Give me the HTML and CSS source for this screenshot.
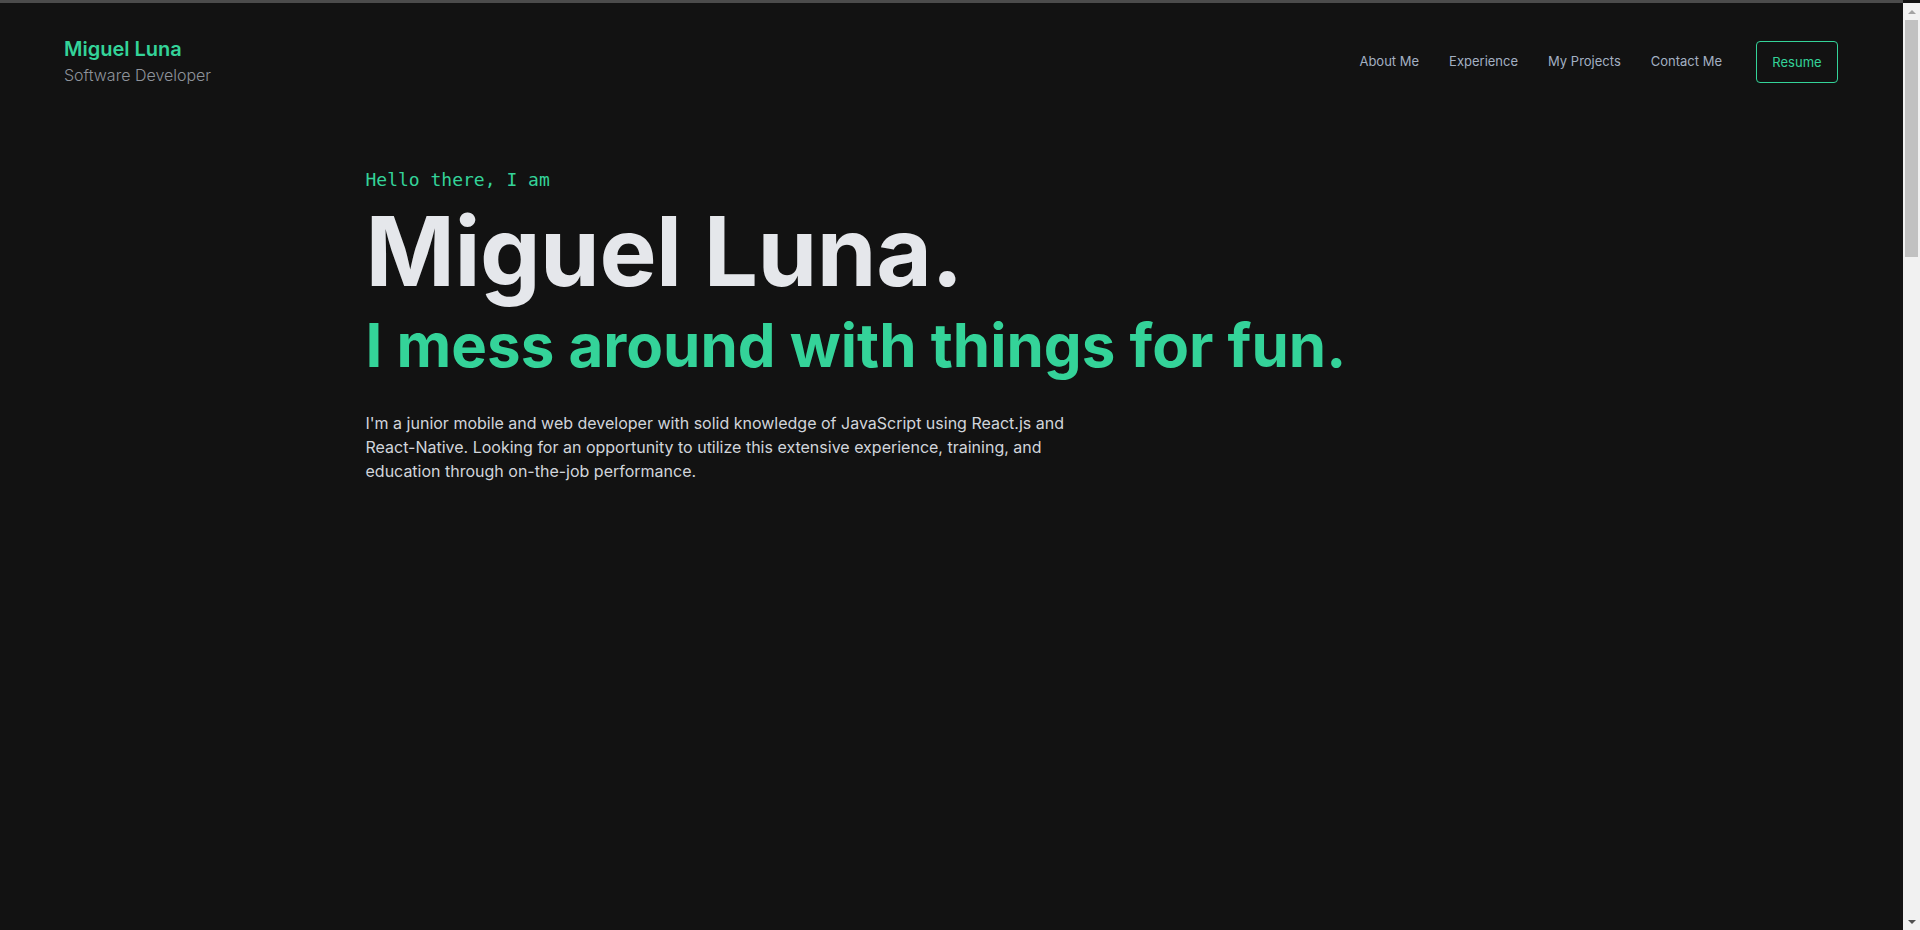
FILE: index.html
```html
<!DOCTYPE html>
<html lang="en">
<head>
<meta charset="utf-8">
<title>Miguel Luna</title>
<link rel="stylesheet" href="styles.css">
</head>
<body>
<header class="header">
  <div class="brand">
    <div class="brand-name">Miguel Luna</div>
    <div class="brand-role">Software Developer</div>
  </div>
  <nav class="nav">
    <a class="nav-link" href="#about">About Me</a>
    <a class="nav-link" href="#experience">Experience</a>
    <a class="nav-link" href="#projects">My Projects</a>
    <a class="nav-link" href="#contact">Contact Me</a>
    <a class="resume-btn" href="#resume">Resume</a>
  </nav>
</header>
<main class="hero">
  <p class="hello">Hello there, I am</p>
  <h1 class="hero-name">Miguel Luna.</h1>
  <h2 class="hero-tagline">I mess around with things for fun.</h2>
  <p class="hero-text">I'm a junior mobile and web developer with solid knowledge of JavaScript using React.js and React-Native. Looking for an opportunity to utilize this extensive experience, training, and education through on-the-job performance.</p>
</main>
<div class="scrollbar" aria-hidden="true">
  <span class="sb-button"><span class="sb-arrow-up"></span></span>
  <span class="sb-thumb"></span>
  <span class="sb-track"></span>
  <span class="sb-button"><span class="sb-arrow-down"></span></span>
</div>
</body>
</html>
```
FILE: styles.css
```css
html {
  background: #121212;
}
body {
  margin: 0 17px 0 0;
  border-top: 3px solid #4b4b4b;
  background: #121212;
  font-family: Inter, "Noto Sans", sans-serif;
  color: #e5e7eb;
}
.header {
  display: flex;
  justify-content: space-between;
  align-items: flex-start;
  padding: 32px 65px 0 64px;
}
.brand-name {
  font-size: 20px;
  line-height: 28px;
  font-weight: 600;
  color: #34d399;
}
.brand-role {
  font-size: 16px;
  line-height: 24px;
  font-weight: 300;
  color: #8e939b;
}
.nav {
  display: flex;
  align-items: center;
  gap: 30px;
  padding-top: 6px;
}
.nav-link {
  font-size: 13px;
  line-height: 20px;
  color: #a3b0c2;
  text-decoration: none;
  margin-bottom: 3px;
}
.resume-btn {
  display: flex;
  align-items: center;
  justify-content: center;
  width: 80px;
  height: 40px;
  border: 1px solid #34d399;
  border-radius: 4px;
  font-size: 13px;
  color: #34d399;
  text-decoration: none;
  margin-left: 4px;
}
.hero {
  width: 1172px;
  margin: 0 auto;
  padding-top: 79px;
  min-height: 3100px;
}
.hello {
  margin: 0;
  font-family: "DejaVu Sans Mono", monospace;
  font-size: 18px;
  line-height: 28px;
  color: #34d399;
}
.hero-name {
  margin: 9px 0 0;
  font-size: 96px;
  line-height: 96px;
  font-weight: 700;
  letter-spacing: -0.5px;
  color: #e5e7eb;
}
.hero-tagline {
  margin: 16px 0 0;
  font-size: 60px;
  line-height: 60px;
  font-weight: 700;
  color: #34d399;
}
.hero-text {
  margin: 36px 0 0;
  max-width: 700px;
  font-size: 16px;
  line-height: 24px;
  color: #d1d5db;
}

/* browser scrollbar */
.scrollbar {
  position: fixed;
  top: 3px;
  right: 0;
  bottom: 0;
  width: 17px;
  background: #f1f1f1;
  display: flex;
  flex-direction: column;
  align-items: center;
}
.sb-button {
  flex: 0 0 17px;
  width: 17px;
  display: flex;
  align-items: center;
  justify-content: center;
}
.sb-arrow-up {
  width: 0;
  height: 0;
  border-left: 4px solid transparent;
  border-right: 4px solid transparent;
  border-bottom: 4px solid #a3a3a3;
}
.sb-arrow-down {
  width: 0;
  height: 0;
  border-left: 4px solid transparent;
  border-right: 4px solid transparent;
  border-top: 4px solid #505050;
}
.sb-thumb {
  flex: 0 0 237px;
  width: 13px;
  background: #c1c1c1;
}
.sb-track {
  flex: 1;
}
```
